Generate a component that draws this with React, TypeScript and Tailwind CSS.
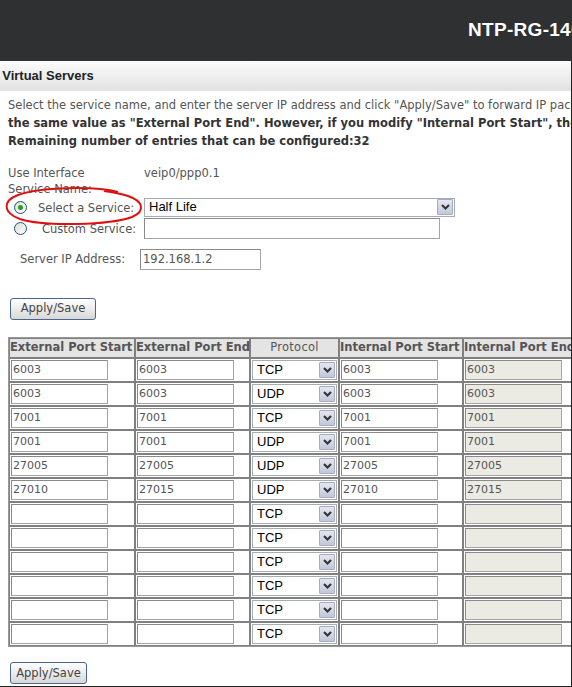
import React from "react";

const ui = "font-['DejaVu_Sans',Verdana,sans-serif]";
const arial = "font-['Liberation_Sans',Arial,sans-serif]";

const rows: [string, string, string, string, string][] = [
  ["6003", "6003", "TCP", "6003", "6003"],
  ["6003", "6003", "UDP", "6003", "6003"],
  ["7001", "7001", "TCP", "7001", "7001"],
  ["7001", "7001", "UDP", "7001", "7001"],
  ["27005", "27005", "UDP", "27005", "27005"],
  ["27010", "27015", "UDP", "27010", "27015"],
  ["", "", "TCP", "", ""],
  ["", "", "TCP", "", ""],
  ["", "", "TCP", "", ""],
  ["", "", "TCP", "", ""],
  ["", "", "TCP", "", ""],
  ["", "", "TCP", "", ""],
];

function Arrow() {
  return (
    <div className="w-[16px] h-[16px] border border-[#a4abc4] bg-gradient-to-b from-[#e4e7f0] to-[#c3c8da] flex items-center justify-center rounded-[1px]">
      <svg width="9" height="6" viewBox="0 0 9 6">
        <path d="M1 1 L4.5 4.5 L8 1" fill="none" stroke="#333" strokeWidth="2" />
      </svg>
    </div>
  );
}

function Radio({ checked }: { checked?: boolean }) {
  return (
    <div className="w-[13px] h-[13px] rounded-full border border-[#1c5180] bg-gradient-to-br from-[#dcdcd6] to-white flex items-center justify-center">
      {checked && <div className="w-[5px] h-[5px] rounded-full bg-[#21a121]" />}
    </div>
  );
}

function Button({ w }: { w: string }) {
  return (
    <button
      className={`${ui} ${w} h-[22px] text-[11.5px] text-[#444] border border-[#4a6590] rounded-[3px] bg-gradient-to-b from-white to-[#d8d8d8]`}
    >
      Apply/Save
    </button>
  );
}

function Cell({ value, disabled }: { value: string; disabled?: boolean }) {
  return (
    <td className="border border-[#808080] px-[1px] py-0 h-[24px] align-middle">
      <div
        className={`w-[97px] h-[20px] border border-[#a5a5a5] border-t-[#8a8a8a] border-l-[#8a8a8a] ${
          disabled ? "bg-[#ebebe4]" : "bg-white"
        } ${ui} text-[11px] text-[#555] leading-[18px] pl-[1px]`}
      >
        {value}
      </div>
    </td>
  );
}

export default function App() {
  return (
    <div className="w-[572px] h-[687px] overflow-hidden bg-white">
      <header className="h-[61px] bg-[#2f3032] flex items-center pl-[468px] overflow-hidden">
        <span className={`${arial} whitespace-nowrap text-white font-bold text-[19px] tracking-[0.3px]`}>
          NTP-RG-1402G-W
        </span>
      </header>

      <div className="relative w-[572px] h-[626px] border-r border-b border-[#222] overflow-hidden">
        <div className="h-[30px] bg-gradient-to-b from-[#fbfbfb] to-[#e2e2e2] flex items-center">
          <span className={`${arial} ml-[-5px] whitespace-nowrap font-bold text-[13px] text-[#222]`}>
            / Virtual Servers
          </span>
        </div>

        <div className={`${ui} text-[11.5px] leading-[18px] mt-[5px] pl-[8px] whitespace-nowrap`}>
          <div className="text-[#555]">
            Select the service name, and enter the server IP address and click "Apply/Save" to forward IP packets
          </div>
          <div className="font-bold text-[#333]">
            the same value as "External Port End". However, if you modify "Internal Port Start", then
          </div>
          <div className="font-bold text-[#333]">Remaining number of entries that can be configured:32</div>
        </div>

        <div className={`${ui} text-[11.5px] text-[#555] mt-[15px]`}>
          <div className="flex h-[16px] leading-[16px] pl-[8px]">
            <span className="w-[136px]">Use Interface</span>
            <span>veip0/ppp0.1</span>
          </div>
          <div className="h-[16px] leading-[16px] pl-[8px]">Service Name:</div>
          <div className="flex items-center h-[20px]">
            <div className="w-[14px]" />
            <Radio checked />
            <span className="ml-[11px] w-[106px] mt-[3px] whitespace-nowrap">Select a Service:</span>
            <div className="w-[311px] h-[19px] border border-[#a5acb2] flex items-center justify-between pr-[1px]">
              <span className={`${arial} text-[13px] text-black pl-[4px]`}>Half Life</span>
              <Arrow />
            </div>
          </div>
          <div className="flex items-center h-[22px]">
            <div className="w-[14px]" />
            <Radio />
            <span className="ml-[15px] w-[102px] mt-[4px] whitespace-nowrap">Custom Service:</span>
            <div className="w-[296px] h-[21px] border border-[#a5a5a5] border-t-[#8a8a8a] border-l-[#8a8a8a]" />
          </div>
          <div className="flex items-center h-[21px] mt-[10px] pl-[20px]">
            <span className="w-[120px] whitespace-nowrap">Server IP Address:</span>
            <div className="w-[121px] h-[21px] border border-[#a5a5a5] border-t-[#8a8a8a] border-l-[#8a8a8a] leading-[19px] pl-[2px]">
              192.168.1.2
            </div>
          </div>
        </div>

        <div className="mt-[24px] pl-[10px]">
          <Button w="w-[86px]" />
        </div>

        <table className="mt-[17px] ml-[8px] border-separate border-spacing-0 border border-[#999] table-fixed w-[584px]">
          <colgroup>
            <col className="w-[126px]" />
            <col className="w-[115px]" />
            <col className="w-[89px]" />
            <col className="w-[124px]" />
            <col className="w-[130px]" />
          </colgroup>
          <thead>
            <tr className={`${ui} text-[11.5px] font-bold text-[#555] bg-[#e4e4e4]`}>
              <th className="border border-[#808080] h-[20px] px-0 whitespace-nowrap text-left">External Port Start</th>
              <th className="border border-[#808080] px-0 whitespace-nowrap text-left">External Port End</th>
              <th className="border border-[#808080] px-0 whitespace-nowrap font-normal tracking-[0.3px]">Protocol</th>
              <th className="border border-[#808080] px-0 whitespace-nowrap text-left">Internal Port Start</th>
              <th className="border border-[#808080] px-0 whitespace-nowrap text-left">Internal Port End</th>
            </tr>
          </thead>
          <tbody>
            {rows.map((r, i) => (
              <tr key={i}>
                <Cell value={r[0]} />
                <Cell value={r[1]} />
                <td className="border border-[#808080] px-[1px] py-0 align-middle">
                  <div className="w-[85px] h-[20px] border border-[#a5acb2] flex items-center justify-between pr-[1px]">
                    <span className={`${arial} text-[13px] text-black pl-[4px]`}>{r[2]}</span>
                    <Arrow />
                  </div>
                </td>
                <Cell value={r[3]} />
                <Cell value={r[4]} disabled />
              </tr>
            ))}
          </tbody>
        </table>

        <div className="mt-[12px] pl-[10px]">
          <Button w="w-[77px]" />
        </div>

        <svg className="absolute left-0 top-[122px]" width="150" height="50" viewBox="0 0 150 50">
          <path
            d="M118 9 C95 3 40 4 18 12 C2 18 3 30 20 36 C45 44 110 42 132 34 C146 28 143 18 128 13 C122 11 112 9 104 8"
            fill="none"
            stroke="#e01010"
            strokeWidth="2"
          />
        </svg>
      </div>
    </div>
  );
}
